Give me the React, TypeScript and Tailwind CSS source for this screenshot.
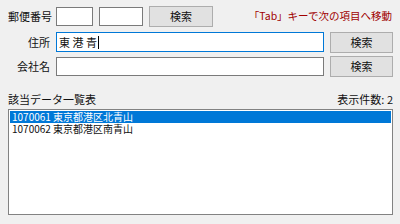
import React from "react";

const font = { fontFamily: '"Noto Sans CJK JP", "Noto Sans", sans-serif' };

function Btn({ w }: { w: string }) {
  return (
    <div
      className={`${w} h-[21px] flex items-center justify-center bg-[#e1e1e1] border border-[#adadad] text-[11px] text-[#111]`}
    >
      検索
    </div>
  );
}

export default function App() {
  return (
    <div
      className="w-[400px] h-[224px] bg-[#f0f0f0] text-[11px] leading-none text-[#111] flex flex-col overflow-hidden"
      style={font}
    >
      {/* row 1 */}
      <div className="flex items-center h-[22px] mt-[5px] pl-[8px] pr-[8px]">
        <div className="w-[48px]">郵便番号</div>
        <div className="w-[37px] h-[19px] bg-white border border-[#7a7a7a]" />
        <div className="w-[44px] h-[19px] bg-white border border-[#7a7a7a] ml-[6px]" />
        <div className="ml-[6px]">
          <Btn w="w-[64px]" />
        </div>
        <div className="ml-auto text-[#a00000] text-[10.5px]">「Tab」キーで次の項目へ移動</div>
      </div>
      {/* row 2 */}
      <div className="flex items-center h-[20px] mt-[5px] pl-[8px] pr-[7px]">
        <div className="w-[48px] text-right pr-[6px]">住所</div>
        <div className="w-[268px] h-[20px] bg-white border border-[#0078d7] flex items-center pl-[2px] text-[11px]">
          <span>東 港 青</span>
          <span className="w-px h-[13px] bg-black ml-[1px]" />
        </div>
        <div className="ml-[6px]">
          <Btn w="w-[63px]" />
        </div>
      </div>
      {/* row 3 */}
      <div className="flex items-center h-[20px] mt-[4px] pl-[8px] pr-[7px]">
        <div className="w-[48px] text-right pr-[6px]">会社名</div>
        <div className="w-[268px] h-[19px] bg-white border border-[#7a7a7a]" />
        <div className="ml-[6px]">
          <Btn w="w-[63px]" />
        </div>
      </div>
      {/* header */}
      <div className="flex items-end justify-between mt-[17px] pl-[8px] pr-[7px] h-[12px]">
        <div>該当データ一覧表</div>
        <div>表示件数: 2</div>
      </div>
      {/* list */}
      <div className="mx-[8px] mt-[4px] mr-[7px] h-[106px] bg-white border border-[#828282] p-px text-[10px] leading-[12px]">
        <div className="h-[12px] bg-[#0078d7] text-white pl-[2px]">1070061 東京都港区北青山</div>
        <div className="h-[12px] pl-[2px]">1070062 東京都港区南青山</div>
      </div>
    </div>
  );
}
